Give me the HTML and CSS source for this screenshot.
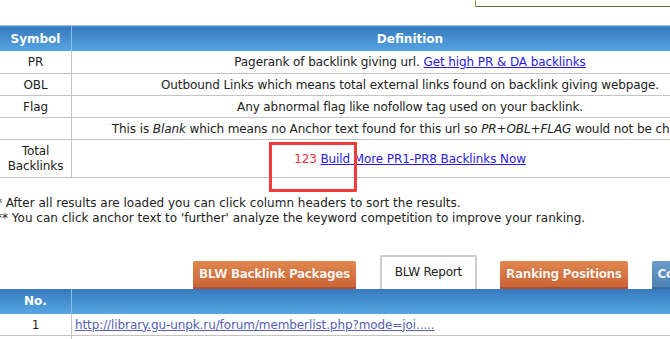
FILE: index.html
```html
<!DOCTYPE html>
<html>
<head>
<meta charset="utf-8">
<link rel="stylesheet" href="styles.css">
</head>
<body>
<div class="page">
  <div class="topbox"></div>

  <table class="legend">
    <thead>
      <tr><th class="c1">Symbol</th><th class="c2">Definition</th></tr>
    </thead>
    <tbody>
      <tr><td class="c1">PR</td><td class="c2">Pagerank of backlink giving url. <a href="#" class="lnk">Get high PR &amp; DA backlinks</a></td></tr>
      <tr><td class="c1">OBL</td><td class="c2">Outbound Links which means total external links found on backlink giving webpage.</td></tr>
      <tr><td class="c1">Flag</td><td class="c2">Any abnormal flag like nofollow tag used on your backlink.</td></tr>
      <tr><td class="c1"></td><td class="c2 nowrap">This is <i>Blank</i> which means no Anchor text found for this url so <i>PR+OBL+FLAG</i> would not be checked.</td></tr>
      <tr class="total"><td class="c1">Total<br>Backlinks</td><td class="c2"><span class="count">123</span> <a href="#" class="lnk">Build More PR1-PR8 Backlinks Now</a></td></tr>
    </tbody>
  </table>

  <div class="notes">
    <p>* After all results are loaded you can click column headers to sort the results.</p>
    <p>** You can click anchor text to 'further' analyze the keyword competition to improve your ranking.</p>
  </div>

  <div class="tabs">
    <span class="tab orange">BLW Backlink Packages</span>
    <span class="tab active">BLW Report</span>
    <span class="tab orange">Ranking Positions</span>
    <span class="tab blue">Competitors</span>
  </div>

  <table class="results">
    <thead>
      <tr><th class="c1">No.</th><th class="c2"></th></tr>
    </thead>
    <tbody>
      <tr><td class="c1">1</td><td class="c2 left"><a href="#" class="visited">http://library.gu-unpk.ru/forum/memberlist.php?mode=joi.....</a></td></tr>
      <tr><td class="c1">&nbsp;</td><td class="c2"></td></tr>
    </tbody>
  </table>

  <div class="highlight"></div>
</div>
</body>
</html>
```

FILE: styles.css
```css
html, body {
  margin: 0;
  padding: 0;
  background: #ffffff;
  overflow: hidden;
}

.page {
  position: relative;
  width: 748px;
  font-family: Verdana, "DejaVu Sans", sans-serif;
  font-size: 12px;
  color: #222222;
}

.topbox {
  margin-left: 475px;
  height: 6px;
  border-left: 1px solid #8ca050;
  border-bottom: 1px solid #5a6e30;
}

table {
  border-collapse: collapse;
  width: 748px;
  table-layout: fixed;
}

.legend {
  margin-top: 18px;
}

th {
  height: 25px;
  padding: 0;
  color: #ffffff;
  font-weight: bold;
  font-size: 12px;
  background: linear-gradient(#3679bd, #57a6e2);
  border-top: 1px solid #9fbad3;
  text-align: center;
}

th.c1 {
  border-right: 1px solid #8cbde6;
}

th.c1, td.c1 {
  width: 71px;
}

tbody tr {
  height: 22px;
}

td {
  padding: 2px 0 0;
  text-align: center;
  border-bottom: 1px solid #c4c4c4;
  line-height: 15px;
  letter-spacing: -0.1px;
}

td.c1 {
  border-right: 1px solid #c4c4c4;
}

.nowrap {
  white-space: nowrap;
  overflow: hidden;
}

.legend .total {
  height: 38px;
}

.count {
  color: #f0303a;
}

.lnk {
  color: #2a1ae6;
}

.visited {
  color: #5560b0;
}

.notes {
  margin-top: 18px;
  margin-left: -4px;
}

.notes p {
  margin: 0;
  line-height: 15px;
}

.tabs {
  display: flex;
  align-items: flex-end;
  padding-left: 193px;
  margin-top: 29px;
  height: 34px;
}

.tab {
  display: block;
  box-sizing: border-box;
  height: 28px;
  line-height: 27px;
  padding: 0 6px;
  border-radius: 2px 2px 0 0;
  white-space: nowrap;
}

.tab.orange {
  color: #fff4ec;
  font-weight: bold;
  letter-spacing: -0.35px;
  background: linear-gradient(#e0874f, #cb6536);
  border-bottom: 2px solid #b05030;
  text-shadow: 0 0 1px rgba(120, 50, 20, 0.5);
}

.tab.active {
  height: 34px;
  line-height: 30px;
  padding: 0 13px;
  margin: 0 23px 0 24px;
  background: #ffffff;
  border: 2px solid #cccccc;
  border-bottom: none;
  color: #222222;
  letter-spacing: -0.2px;
}

.tab.blue {
  margin-left: 24px;
  color: #eef4fa;
  font-weight: bold;
  letter-spacing: -0.35px;
  background: linear-gradient(#6c9cc8, #4e82b4);
  border-bottom: 2px solid #3e6e9e;
}

.results th {
  border-top: none;
}

.results td.left {
  text-align: left;
  padding-left: 3px;
}

.highlight {
  position: absolute;
  left: 269px;
  top: 142px;
  width: 82px;
  height: 44px;
  border: 3px solid #f23c3c;
}
```
